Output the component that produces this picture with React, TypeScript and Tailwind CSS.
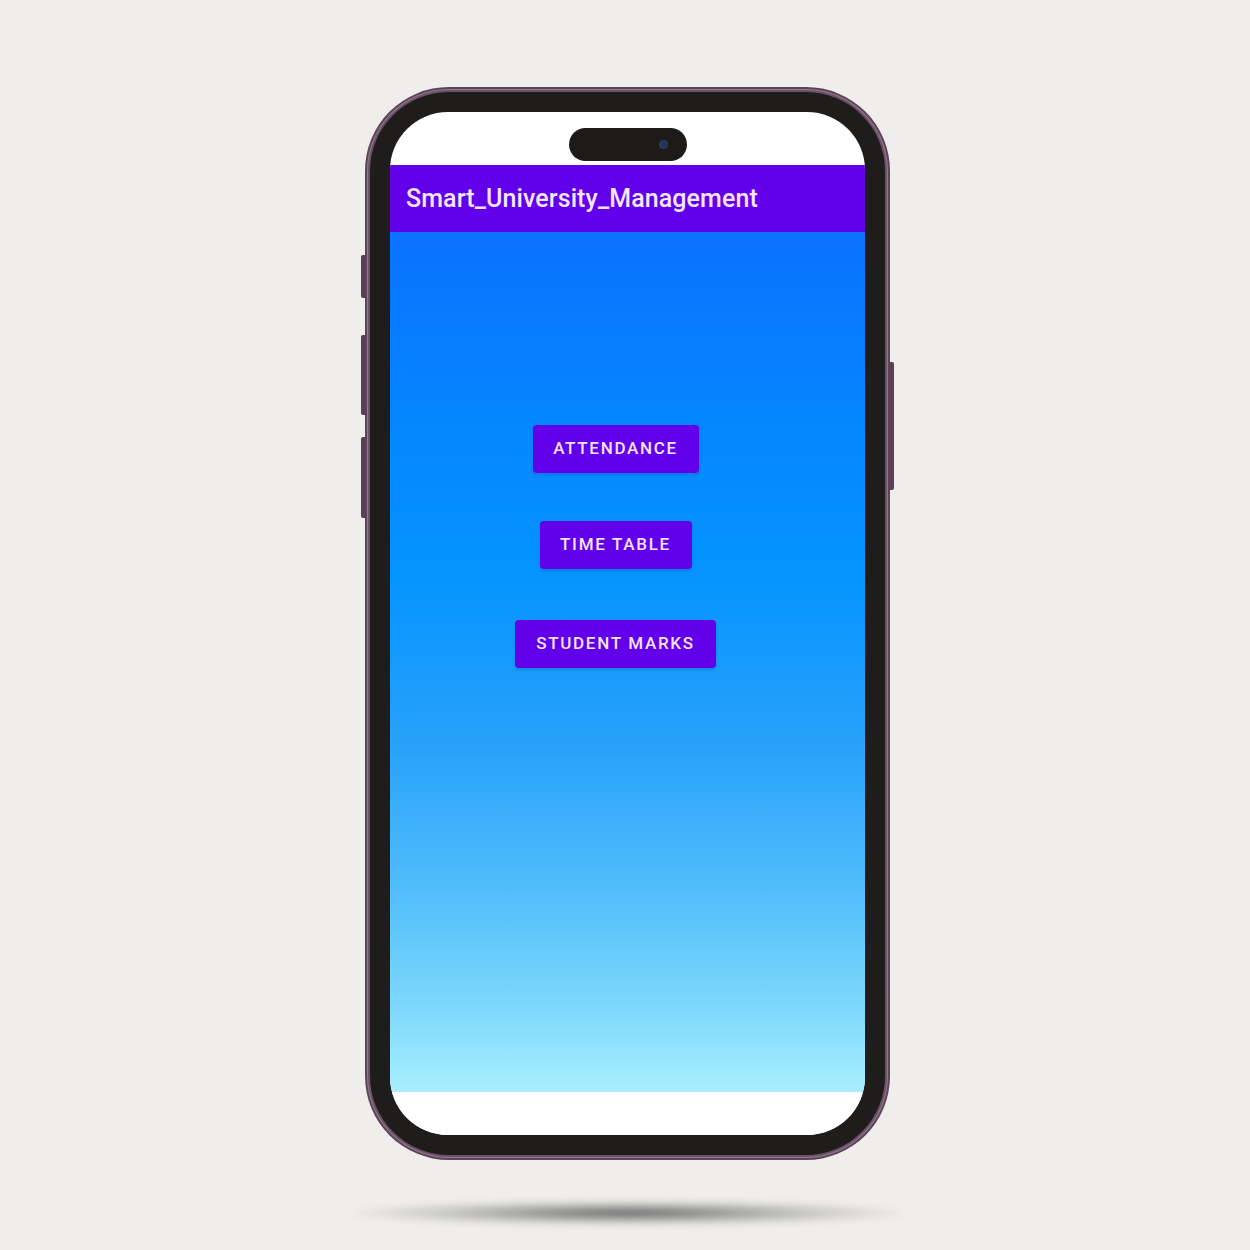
export default function App() {
  const buttons = [
    { label: 'ATTENDANCE', w: 'w-[166px]' },
    { label: 'TIME TABLE', w: 'w-[152px]' },
    { label: 'STUDENT MARKS', w: 'w-[201px]' },
  ];

  return (
    <div className="w-full h-[1250px] bg-[#efeeec] flex flex-col items-center pt-[87px] pl-[5px] font-['Roboto','Liberation_Sans',sans-serif]">
      {/* Phone */}
      <div className="relative">
        {/* side buttons */}
        <div className="absolute left-[-4px] top-[168px] w-[5px] h-[43px] rounded-l-[2px] bg-[#5a3f55]" />
        <div className="absolute left-[-4px] top-[248px] w-[5px] h-[80px] rounded-l-[2px] bg-[#5a3f55]" />
        <div className="absolute left-[-4px] top-[350px] w-[5px] h-[81px] rounded-l-[2px] bg-[#5a3f55]" />
        <div className="absolute right-[-4px] top-[275px] w-[5px] h-[128px] rounded-r-[2px] bg-[#5a3f55]" />

        <div className="w-[525px] h-[1073px] rounded-[84px] bg-[#5e4459] p-[2px]">
          <div className="w-full h-full rounded-[82px] bg-[#917a8d] p-[1px]">
            <div className="w-full h-full rounded-[81px] bg-[#6c5166] p-[2px]">
              <div className="w-full h-full rounded-[79px] bg-[#1f1d1c] p-[20px]">
                {/* Screen */}
                <div className="w-full h-full rounded-[58px] bg-white overflow-hidden flex flex-col">
                  <div className="h-[53px] flex justify-center shrink-0">
                    <div className="mt-[16px] w-[118px] h-[33px] rounded-full bg-[#1c1b1a] flex items-center justify-end pr-[19px]">
                      <div className="w-[9px] h-[9px] rounded-full bg-[#1d3557] border border-[#2a4a70]" />
                    </div>
                  </div>
                  <div className="h-[67px] bg-[#6200ea] flex items-center pl-[16px] shrink-0">
                    <span className="text-[25px] font-medium text-[#f5e6ff] tracking-[0.1px]">
                      Smart_University_Management
                    </span>
                  </div>
                  <div className="h-[860px] shrink-0 bg-[linear-gradient(180deg,#0a72ff_0%,#0584ff_20%,#0594ff_40%,#28a2fa_60%,#55c0fb_78%,#7dd8fc_90%,#a8effd_100%)] flex flex-col items-center pt-[193px] pr-[24px]">
                    {buttons.map((b, i) => (
                      <div
                        key={b.label}
                        className={`${b.w} h-[48px] rounded-[4px] bg-[#6200ea] shadow-[0_2px_3px_rgba(0,0,0,0.15)] flex items-center justify-center text-[17px] font-medium tracking-[1.7px] text-[#f3e4ff] ${i === 1 ? 'mt-[48px]' : i === 2 ? 'mt-[51px]' : ''}`}
                      >
                        {b.label}
                      </div>
                    ))}
                  </div>
                  <div className="flex-1 bg-white" />
                </div>
              </div>
            </div>
          </div>
        </div>
      </div>
      {/* floor shadow */}
      <div className="mt-[40px] w-[560px] h-[26px] rounded-full bg-[radial-gradient(ellipse_at_center,rgba(60,60,60,0.75)_0%,rgba(120,120,120,0.35)_45%,rgba(239,238,236,0)_72%)] blur-[3px]" />
    </div>
  );
}
